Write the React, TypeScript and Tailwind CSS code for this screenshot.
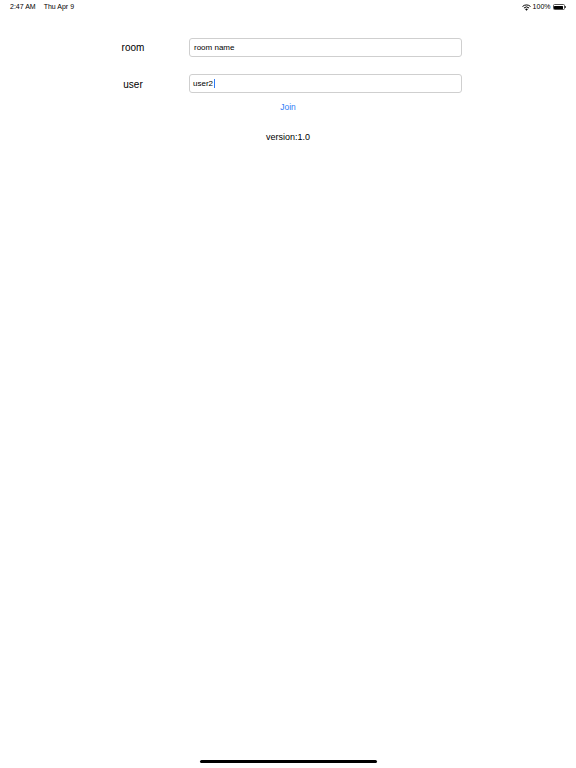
export default function App() {
  return (
    <div className="w-[576px] h-[768px] bg-white flex flex-col text-black font-['Liberation_Sans',Arial,sans-serif] relative overflow-hidden">
      {/* status bar */}
      <div className="h-[14px] flex items-center justify-between px-[10px] text-[7px]">
        <div className="flex gap-[8px]">
          <span>2:47 AM</span>
          <span>Thu Apr 9</span>
        </div>
        <div className="flex items-center gap-[2px]">
          <svg width="9" height="7" viewBox="0 0 18 14">
            <path d="M9 13.5 6.2 10.4a4 4 0 0 1 5.6 0Z" fill="black" />
            <path d="M3.9 8a7.6 7.6 0 0 1 10.2 0" stroke="black" strokeWidth="2" fill="none" />
            <path d="M1 5a11.8 11.8 0 0 1 16 0" stroke="black" strokeWidth="2" fill="none" />
          </svg>
          <span>100%</span>
          <div className="flex items-center">
            <div className="w-[12px] h-[6px] rounded-[1.5px] border border-[#555] p-[0.5px]">
              <div className="w-full h-full bg-black rounded-[0.5px]" />
            </div>
            <div className="w-[1px] h-[2px] bg-[#555] ml-[0.5px]" />
          </div>
        </div>
      </div>

      <div className="flex flex-col pl-[103px] pt-[24px]">
        <div className="flex items-center">
          <span className="w-[60px] text-center text-[10px]">room</span>
          <div className="ml-[26px] w-[273px] h-[19px] border border-[#cfcfcf] rounded-[3px] flex items-center px-[4px] text-[8px]">
            room name
          </div>
        </div>
        <div className="flex items-center mt-[17px]">
          <span className="w-[60px] text-center text-[10px] mt-[2px]">user</span>
          <div className="ml-[26px] w-[273px] h-[19px] border border-[#cfcfcf] rounded-[3px] flex items-center pl-[3px] pr-[4px] text-[8px]">
            user2
            <span className="w-[1px] h-[9px] bg-[#2f7cf6] ml-[0.5px]" />
          </div>
        </div>
      </div>

      <div className="flex justify-center mt-[8px]">
        <span className="text-[8.5px] text-[#2f7cf6]">Join</span>
      </div>
      <div className="flex justify-center mt-[17px]">
        <span className="text-[9px]">version:1.0</span>
      </div>

      <div className="absolute left-[200px] bottom-[5px] w-[177px] h-[3px] rounded-full bg-black" />
    </div>
  );
}
